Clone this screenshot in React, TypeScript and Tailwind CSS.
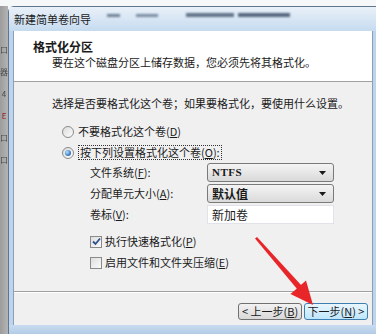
import React from "react";

function Radio({ checked }: { checked?: boolean }) {
  return (
    <span className="flex h-[12px] w-[12px] shrink-0 items-center justify-center rounded-full border border-[#8a8a8a] bg-linear-to-br from-[#dcdcdc] to-[#fdfdfd]">
      {checked && <span className="h-[6px] w-[6px] rounded-full bg-[radial-gradient(circle_at_35%_35%,#b9e2ff,#2a6fb8_70%)]" />}
    </span>
  );
}

function Checkbox({ checked }: { checked?: boolean }) {
  return (
    <span className="flex h-[12px] w-[12px] shrink-0 items-center justify-center border border-[#8a8a8a] bg-linear-to-br from-[#dedede] to-[#fafafa]">
      {checked && (
        <svg width="9" height="9" viewBox="0 0 9 9">
          <path d="M1 4.5 L3.5 7 L8 1.5" fill="none" stroke="#2f4f8f" strokeWidth="1.8" />
        </svg>
      )}
    </span>
  );
}

function Select({ value, bold }: { value: string; bold?: boolean }) {
  return (
    <div className="flex h-[19px] w-[127px] items-center rounded-[3px] border border-[#7a7a7a] bg-linear-to-b from-[#f4f4f4] to-[#dadada] pl-[4px] pr-[7px]">
      <span className={bold ? "flex-1 font-['Liberation_Serif',serif] text-[11px] font-bold tracking-[0.5px]" : "flex-1 text-[12px] font-semibold"}>
        {value}
      </span>
      <svg width="7" height="4" viewBox="0 0 7 4">
        <path d="M0 0 H7 L3.5 4 Z" fill="#1a1a1a" />
      </svg>
    </div>
  );
}

function Button({ children, active }: { children: React.ReactNode; active?: boolean }) {
  return (
    <div
      className={
        active
          ? "flex h-[17px] w-[64px] items-center justify-center rounded-[3px] border border-[#3c7fb1] bg-linear-to-b from-[#eaf6fd] to-[#bee6fd] text-[11px]"
          : "flex h-[17px] w-[64px] items-center justify-center rounded-[3px] border border-[#707070] bg-linear-to-b from-[#f2f2f2] to-[#d8d8d8] text-[11px]"
      }
    >
      {children}
    </div>
  );
}

export default function App() {
  return (
    <div className="relative h-[334px] w-[376px] overflow-hidden bg-[#f6f7f9] font-['Noto_Sans_CJK_SC','Liberation_Sans',sans-serif] text-[11px] text-[#1a1a1a]">
      <div className="flex h-full flex-col">
        <div className="h-[6px] shrink-0 bg-[#f6f7f9]" />
        <div className="flex flex-1">
          {/* desktop behind the window */}
          <div className="flex w-[8px] flex-col items-center gap-[14px] bg-linear-to-r from-[#9c9c9c] to-[#b4b4b4] pt-[40px] text-[8px] leading-none text-[#4a4a4a] blur-[0.4px]">
            <span>口</span>
            <span>器</span>
            <span>4</span>
            <span className="text-[#8a2020]">E</span>
            <span>口</span>
            <span>口</span>
          </div>

          <div className="flex flex-1 flex-col rounded-tl-[6px] border-l border-t border-[#5f7590] bg-[#bed4ec]">
            {/* title bar */}
            <div className="flex h-[24px] shrink-0 items-center bg-linear-to-b from-[#e9f0f8] to-[#c6dbf0] pl-[5px]">
              <span className="text-[11px] leading-none text-[#1a1a1a]">新建简单卷向导</span>
              <div className="mb-[8px] ml-[16px] flex items-center gap-[16px] blur-[1px]">
                <span className="h-[3px] w-[13px] bg-[#6f8196]" />
                <span className="h-[3px] w-[22px] bg-[#7b8ca2]" />
                <span className="ml-[12px] h-[4px] w-[48px] bg-[#62748a]" />
                <span className="-ml-[12px] h-[4px] w-[52px] bg-[#56687f]" />
              </div>
            </div>

            <div className="ml-[4px] mr-[3px] flex flex-1 flex-col border-x border-[#8aa0b8]">
              {/* header */}
              <div className="h-[51px] shrink-0 border-b border-[#a0a0a0] bg-white pt-[8px]">
                <div className="pl-[19px] text-[12px] font-bold leading-[16px]">格式化分区</div>
                <div className="pl-[38px] leading-[14px]">要在这个磁盘分区上储存数据，您必须先将其格式化。</div>
              </div>

              {/* body */}
              <div className="flex h-[210px] shrink-0 flex-col border-b border-[#a0a0a0] bg-[#f0f0f0] pt-[13px]">
                <div className="pl-[38px] leading-[16px]">选择是否要格式化这个卷；如果要格式化，要使用什么设置。</div>

                <div className="mt-[10px] flex flex-col pl-[48px]">
                  <div className="flex h-[21px] items-center gap-[4px]">
                    <Radio />
                    <span>
                      不要格式化这个卷(<u>D</u>)
                    </span>
                  </div>
                  <div className="flex h-[21px] items-center gap-[4px]">
                    <Radio checked />
                    <span className="border border-dotted border-[#333] px-[1px] leading-[13px]">
                      按下列设置格式化这个卷(<u>O</u>):
                    </span>
                  </div>
                </div>

                <div className="grid grid-cols-[117px_127px] items-center gap-y-[2px] pl-[76px]">
                  <span>文件系统(<u>F</u>):</span>
                  <Select value="NTFS" bold />
                  <span>分配单元大小(<u>A</u>):</span>
                  <Select value="默认值" />
                  <span>卷标(<u>V</u>):</span>
                  <div className="flex h-[19px] items-center border border-[#e2e3ea] bg-white pl-[4px] text-[12px]">新加卷</div>
                </div>

                <div className="mt-[7px] flex flex-col pl-[76px]">
                  <div className="flex h-[21px] items-center gap-[3px]">
                    <Checkbox checked />
                    <span>
                      执行快速格式化(<u>P</u>)
                    </span>
                  </div>
                  <div className="flex h-[21px] items-center gap-[3px]">
                    <Checkbox />
                    <span>
                      启用文件和文件夹压缩(<u>E</u>)
                    </span>
                  </div>
                </div>
              </div>

              {/* footer */}
              <div className="flex flex-1 justify-end gap-[2px] border-t border-white bg-[#f0f0f0] pr-[4px] pt-[10px]">
                <Button>
                  &lt; 上一步(<u>B</u>)
                </Button>
                <Button active>
                  下一步(<u>N</u>) &gt;
                </Button>
              </div>
            </div>

            {/* bottom frame */}
            <div className="h-[9px] shrink-0 bg-linear-to-b from-[#c8dcf1] to-[#b3cce6]" />
          </div>
        </div>
      </div>

      {/* red arrow */}
      <svg className="pointer-events-none absolute left-0 top-0" width="376" height="334" viewBox="0 0 376 334">
        <polygon points="255,238.5 257,237 301.5,285.5 297.5,289.5" fill="#e8262a" />
        <polygon points="290.5,294 306,280.5 313,305" fill="#e8262a" />
      </svg>
    </div>
  );
}
